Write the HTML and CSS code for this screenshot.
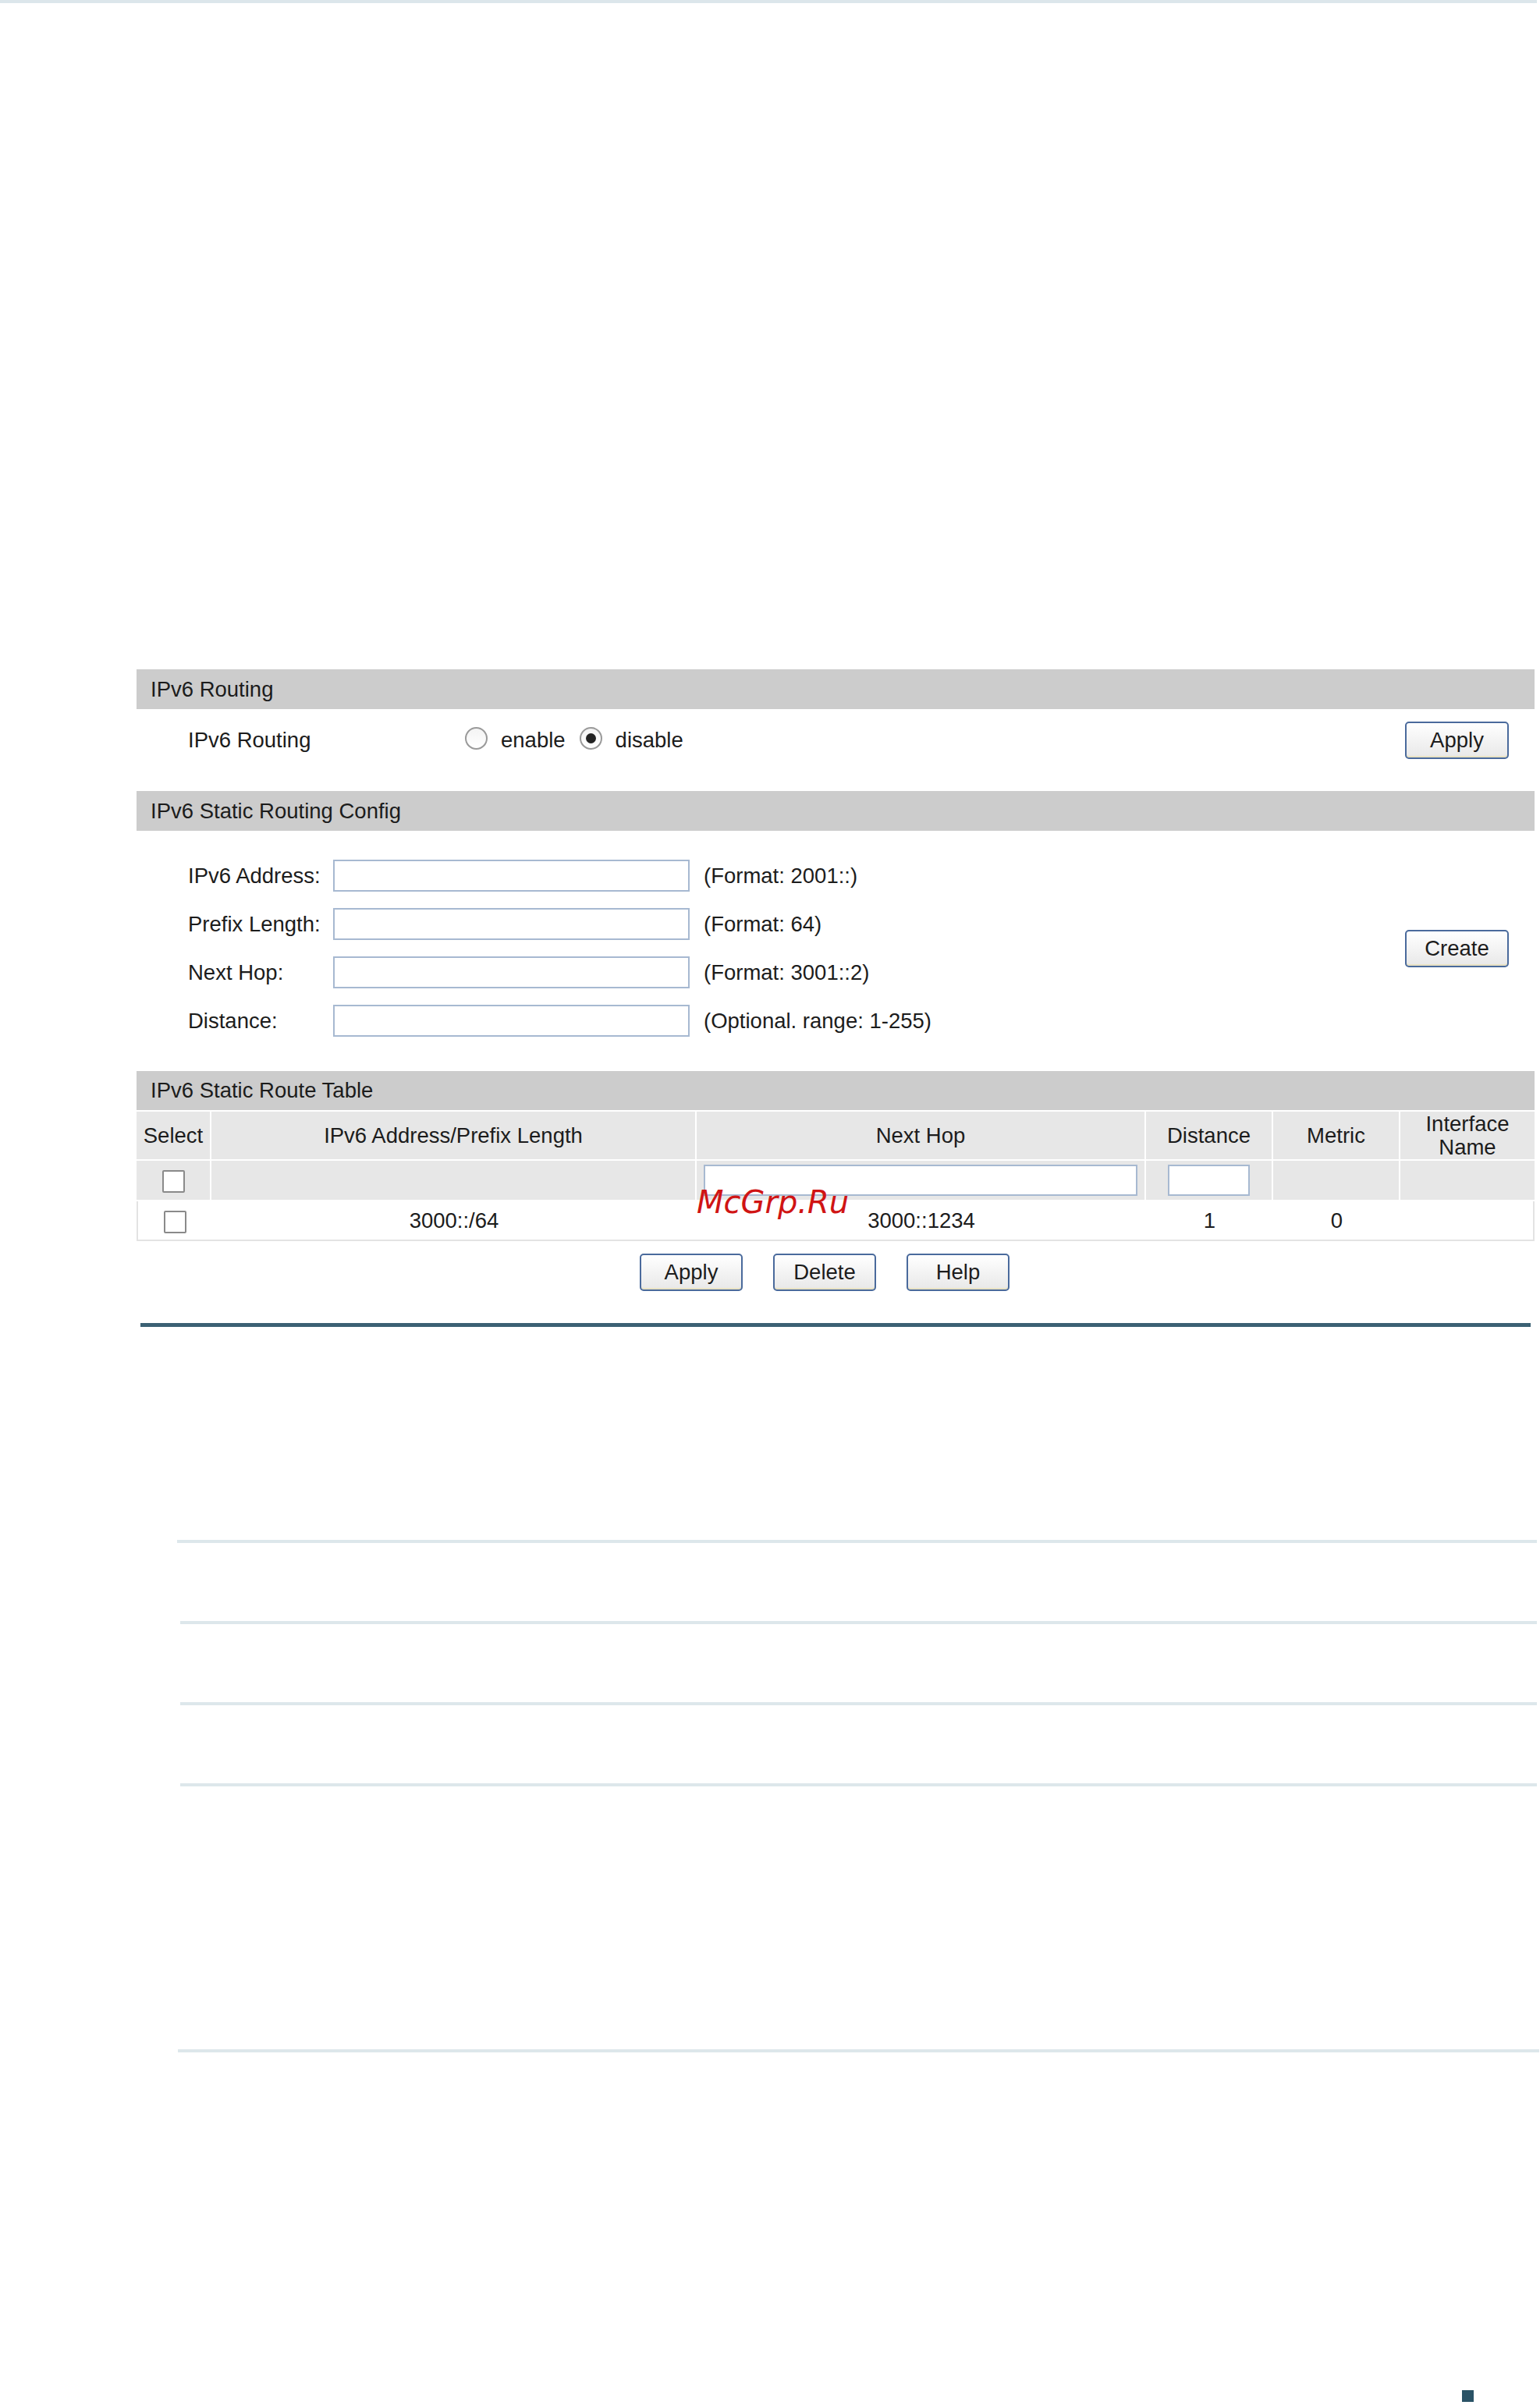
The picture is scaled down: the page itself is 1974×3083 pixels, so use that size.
FILE: index.html
```html
<!DOCTYPE html>
<html lang="en">
<head>
<meta charset="UTF-8">
<meta name="viewport" content="width=device-width, initial-scale=1.0">
<title>IPv6 Static Routing</title>
<link rel="stylesheet" href="styles.css">
</head>
<body>
  <div class="top-line"></div>

  <div class="panel">
    <!-- IPv6 Routing -->
    <div class="bar">IPv6 Routing</div>
    <div class="section routing">
      <span class="label wide">IPv6 Routing</span>
      <span class="radio"></span><span class="radio-text">enable</span>
      <span class="radio on"></span><span class="radio-text">disable</span>
      <button class="btn push-right">Apply</button>
    </div>

    <!-- Static routing config -->
    <div class="bar">IPv6 Static Routing Config</div>
    <div class="section config">
      <div class="form">
        <div class="form-row">
          <span class="label">IPv6 Address:</span>
          <input class="field" type="text">
          <span class="hint">(Format: 2001::)</span>
        </div>
        <div class="form-row">
          <span class="label">Prefix Length:</span>
          <input class="field" type="text">
          <span class="hint">(Format: 64)</span>
        </div>
        <div class="form-row">
          <span class="label">Next Hop:</span>
          <input class="field" type="text">
          <span class="hint">(Format: 3001::2)</span>
        </div>
        <div class="form-row">
          <span class="label">Distance:</span>
          <input class="field" type="text">
          <span class="hint">(Optional. range: 1-255)</span>
        </div>
      </div>
      <button class="btn push-right">Create</button>
    </div>

    <!-- Route table -->
    <div class="bar short">IPv6 Static Route Table</div>
    <table class="route-table">
      <colgroup>
        <col style="width: 96px">
        <col style="width: 622px">
        <col style="width: 576px">
        <col style="width: 163px">
        <col style="width: 163px">
        <col style="width: 172px">
      </colgroup>
      <tr class="head-row">
        <th>Select</th>
        <th>IPv6 Address/Prefix Length</th>
        <th>Next Hop</th>
        <th>Distance</th>
        <th>Metric</th>
        <th class="two-line">Interface<br>Name</th>
      </tr>
      <tr class="input-row">
        <td><span class="check"></span></td>
        <td></td>
        <td><input class="cell-field hop" type="text"></td>
        <td><input class="cell-field dist" type="text"></td>
        <td></td>
        <td></td>
      </tr>
      <tr class="data-row">
        <td><span class="check"></span></td>
        <td>3000::/64</td>
        <td>3000::1234</td>
        <td>1</td>
        <td>0</td>
        <td></td>
      </tr>
    </table>

    <div class="actions">
      <button class="btn">Apply</button>
      <button class="btn">Delete</button>
      <button class="btn">Help</button>
    </div>

    <div class="panel-rule"></div>
  </div>

  <div class="notes">
    <div class="note-line first"></div>
    <div class="note-line"></div>
    <div class="note-line"></div>
    <div class="note-line"></div>
    <div class="note-line last"></div>
  </div>

  <div class="page-mark"></div>

  <div class="watermark">McGrp.Ru</div>
</body>
</html>
```

FILE: styles.css
```css
body {
  margin: 0;
  padding: 0;
  font-family: "Liberation Sans", Arial, sans-serif;
  font-size: 27.5px;
  color: #1c1c1c;
  background: #fff;
  position: relative; /* watermark sits on top of the page */
}
.top-line {
  height: 4px;
  width: 1970px;
  background-color: #dce6eb;
}
.panel {
  margin: 854px 0 0 175px;
  width: 1792px;
}
.bar {
  height: 51px;
  line-height: 51px;
  padding-left: 18px;
  background-color: #cccccc;
}
.bar.short {
  height: 50px;
  line-height: 50px;
}
.section {
  display: flex;
  align-items: center;
  padding-left: 66px;
  padding-right: 33px;
}
.routing {
  height: 48px;
  padding-top: 16px;
  padding-bottom: 41px;
}
.config {
  padding-top: 37px;
  padding-bottom: 44px;
}
.label {
  flex: none;
  width: 186px;
}
.label.wide {
  width: 355px;
}
.radio {
  flex: none;
  width: 25px;
  height: 25px;
  border: 2px solid #9a9a9a;
  border-radius: 50%;
  background: linear-gradient(#f4f4f4, #ffffff);
  margin-bottom: 6px;
  position: relative;
}
.radio.on::after {
  content: "";
  position: absolute;
  left: 6px;
  top: 6px;
  width: 13px;
  height: 13px;
  border-radius: 50%;
  background-color: #222;
}
.radio-text {
  margin-left: 17px;
  margin-right: 18px;
}
.btn {
  flex: none;
  width: 133px;
  height: 48px;
  padding: 0;
  font-family: inherit;
  font-size: 27.5px;
  color: #1c1c1c;
  border: 2px solid #4a6a9c;
  border-radius: 5px;
  background: linear-gradient(#ffffff, #e8e8e8);
  box-shadow: inset 0 -2px 0 #e9e2c4; /* faint yellow bottom edge */
}
.push-right {
  margin-left: auto;
}
.form {
  display: flex;
  flex-direction: column;
  gap: 21px;
}
.form-row {
  display: flex;
  align-items: center;
  height: 41px;
}
.field {
  box-sizing: border-box;
  width: 457px;
  height: 41px;
  margin: 0;
  border: 2px solid #a7b9d1;
  background: #fff;
}
.hint {
  margin-left: 18px;
}
.route-table {
  margin-top: 2px;
  width: 1792px;
  table-layout: fixed;
  border-collapse: separate;
  border-spacing: 0;
}
.route-table th,
.route-table td {
  padding: 0;
  text-align: center;
  font-weight: normal;
}
.head-row th,
.input-row td {
  background-color: #e7e7e7;
  border-right: 2px solid #fff;
  border-bottom: 2px solid #fff;
}
.head-row th:last-child,
.input-row td:last-child {
  border-right: 0;
}
.head-row th {
  height: 61px;
}
.two-line {
  line-height: 30px;
}
.input-row td {
  height: 50px;
}
.data-row td {
  height: 49px;
  background-color: #fff;
  border-bottom: 2px solid #e3e3e3;
}
.data-row td:first-child {
  border-left: 2px solid #e3e3e3;
}
.data-row td:last-child {
  border-right: 2px solid #e3e3e3;
}
.check {
  display: inline-block;
  box-sizing: border-box;
  width: 29px;
  height: 29px;
  border: 2px solid #8a8a8a;
  border-radius: 2px;
  background: #fff;
  vertical-align: middle;
}
.cell-field {
  box-sizing: border-box;
  height: 40px;
  border: 2px solid #a7b9d1;
  background: #fff;
  vertical-align: middle;
}
.cell-field.hop {
  width: 556px;
}
.cell-field.dist {
  width: 105px;
}
.actions {
  display: flex;
  justify-content: center;
  gap: 39px;
  margin-top: 16px;
  padding-right: 28px;
}
.actions .btn {
  width: 132px;
}
.panel-rule {
  margin: 41px 0 0 5px;
  width: 1782px;
  height: 5px;
  background-color: #3b6174;
}
.notes {
  padding-top: 173px;
}
.note-line {
  height: 4px;
  margin: 100px 0 0 231px;
  width: 1739px;
  background-color: #dde7eb;
}
.note-line.first {
  margin-left: 227px;
  width: 1743px;
}
.note-line.last {
  margin-top: 337px;
  margin-left: 228px;
  width: 1745px;
}
.page-mark {
  margin: 433px 0 0 1874px;
  width: 15px;
  height: 15px;
  background-color: #2a5366;
}
.watermark {
  position: absolute;
  left: 893px;
  top: 1518px;
  font-family: "DejaVu Sans", sans-serif;
  font-style: italic;
  font-size: 40px;
  color: #d01414;
}
```
